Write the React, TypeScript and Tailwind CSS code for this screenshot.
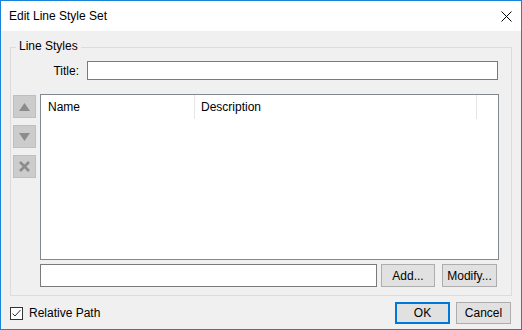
import React from 'react'

const font = { fontFamily: '"Liberation Sans", Arial, sans-serif' }

const SideButton: React.FC<{ children: React.ReactNode }> = ({ children }) => (
  <div className="w-[23px] h-[23px] bg-[#cccccc] border border-[#bfbfbf] flex items-center justify-center">
    {children}
  </div>
)

const Button: React.FC<{ label: string; w: string; primary?: boolean }> = ({ label, w, primary }) => (
  <div
    className={`${w} flex items-center justify-center bg-[#e1e1e1] text-[12px] text-black ${
      primary ? 'border-2 border-[#0078d7]' : 'border border-[#adadad]'
    }`}
  >
    {label}
  </div>
)

export default function App() {
  return (
    <div
      className="w-[522px] h-[330px] border border-[#1883d7] flex flex-col text-[12px] text-black bg-[#f0f0f0]"
      style={font}
    >
      {/* Title bar */}
      <div className="h-[30px] bg-white flex items-center justify-between pl-[8px] pr-[9px] shrink-0">
        <span className="text-[12px] text-black">Edit Line Style Set</span>
        <svg width="11" height="11" viewBox="0 0 11 11" className="mt-[1px]">
          <path d="M0.5 0.5 L10.5 10.5 M10.5 0.5 L0.5 10.5" stroke="#000" strokeWidth="1" />
        </svg>
      </div>

      {/* Group box */}
      <div className="relative ml-[9px] mt-[16px] w-[502px] h-[249px] border border-[#dcdcdc] flex flex-col">
        <span className="absolute left-[5px] top-[-9px] px-[3px] bg-[#f0f0f0] leading-[15px]">Line Styles</span>

        {/* Title row */}
        <div className="flex items-center mt-[13px]">
          <div className="w-[76px] text-right pr-[8px]">Title:</div>
          <div className="w-[411px] h-[19px] bg-white border border-[#7a7a7a]" />
        </div>

        {/* List row */}
        <div className="flex mt-[14px]">
          <div className="ml-[2px] mt-[1px] flex flex-col gap-[7px]">
            <SideButton>
              <svg width="11" height="8" viewBox="0 0 11 8">
                <path d="M5.5 0 L11 8 L0 8 Z" fill="#8c8c8c" />
              </svg>
            </SideButton>
            <SideButton>
              <svg width="11" height="8" viewBox="0 0 11 8">
                <path d="M0 0 L11 0 L5.5 8 Z" fill="#8c8c8c" />
              </svg>
            </SideButton>
            <SideButton>
              <svg width="11" height="11" viewBox="0 0 11 11">
                <path d="M1 1 L10 10 M10 1 L1 10" stroke="#8c8c8c" strokeWidth="2.6" />
              </svg>
            </SideButton>
          </div>
          <div className="ml-[4px] w-[459px] h-[166px] bg-white border border-[#828790]">
            <div className="flex h-[24px]">
              <div className="w-[154px] pl-[7px] flex items-center border-r border-[#e5e5e5]">Name</div>
              <div className="w-[282px] pl-[6px] flex items-center border-r border-[#e5e5e5]">Description</div>
            </div>
          </div>
        </div>

        {/* Bottom row */}
        <div className="flex mt-[4px] h-[23px]">
          <div className="ml-[29px] w-[337px] bg-white border border-[#7a7a7a]" />
          <div className="ml-[4px] flex">
            <Button label="Add..." w="w-[54px]" />
          </div>
          <div className="ml-[7px] flex">
            <Button label="Modify..." w="w-[55px]" />
          </div>
        </div>
      </div>

      {/* Footer */}
      <div className="flex items-center mt-[6px] h-[22px]">
        <div className="ml-[9px] w-[13px] h-[13px] bg-white border border-[#333333] flex items-center justify-center">
          <svg width="11" height="11" viewBox="0 0 11 11">
            <path d="M1.5 5.5 L4 8 L9.5 2" fill="none" stroke="#333" strokeWidth="1" />
          </svg>
        </div>
        <span className="ml-[6px]">Relative Path</span>
        <div className="ml-auto flex h-[22px] gap-[6px] mr-[10px]">
          <Button label="OK" w="w-[55px]" primary />
          <Button label="Cancel" w="w-[55px]" />
        </div>
      </div>
    </div>
  )
}
